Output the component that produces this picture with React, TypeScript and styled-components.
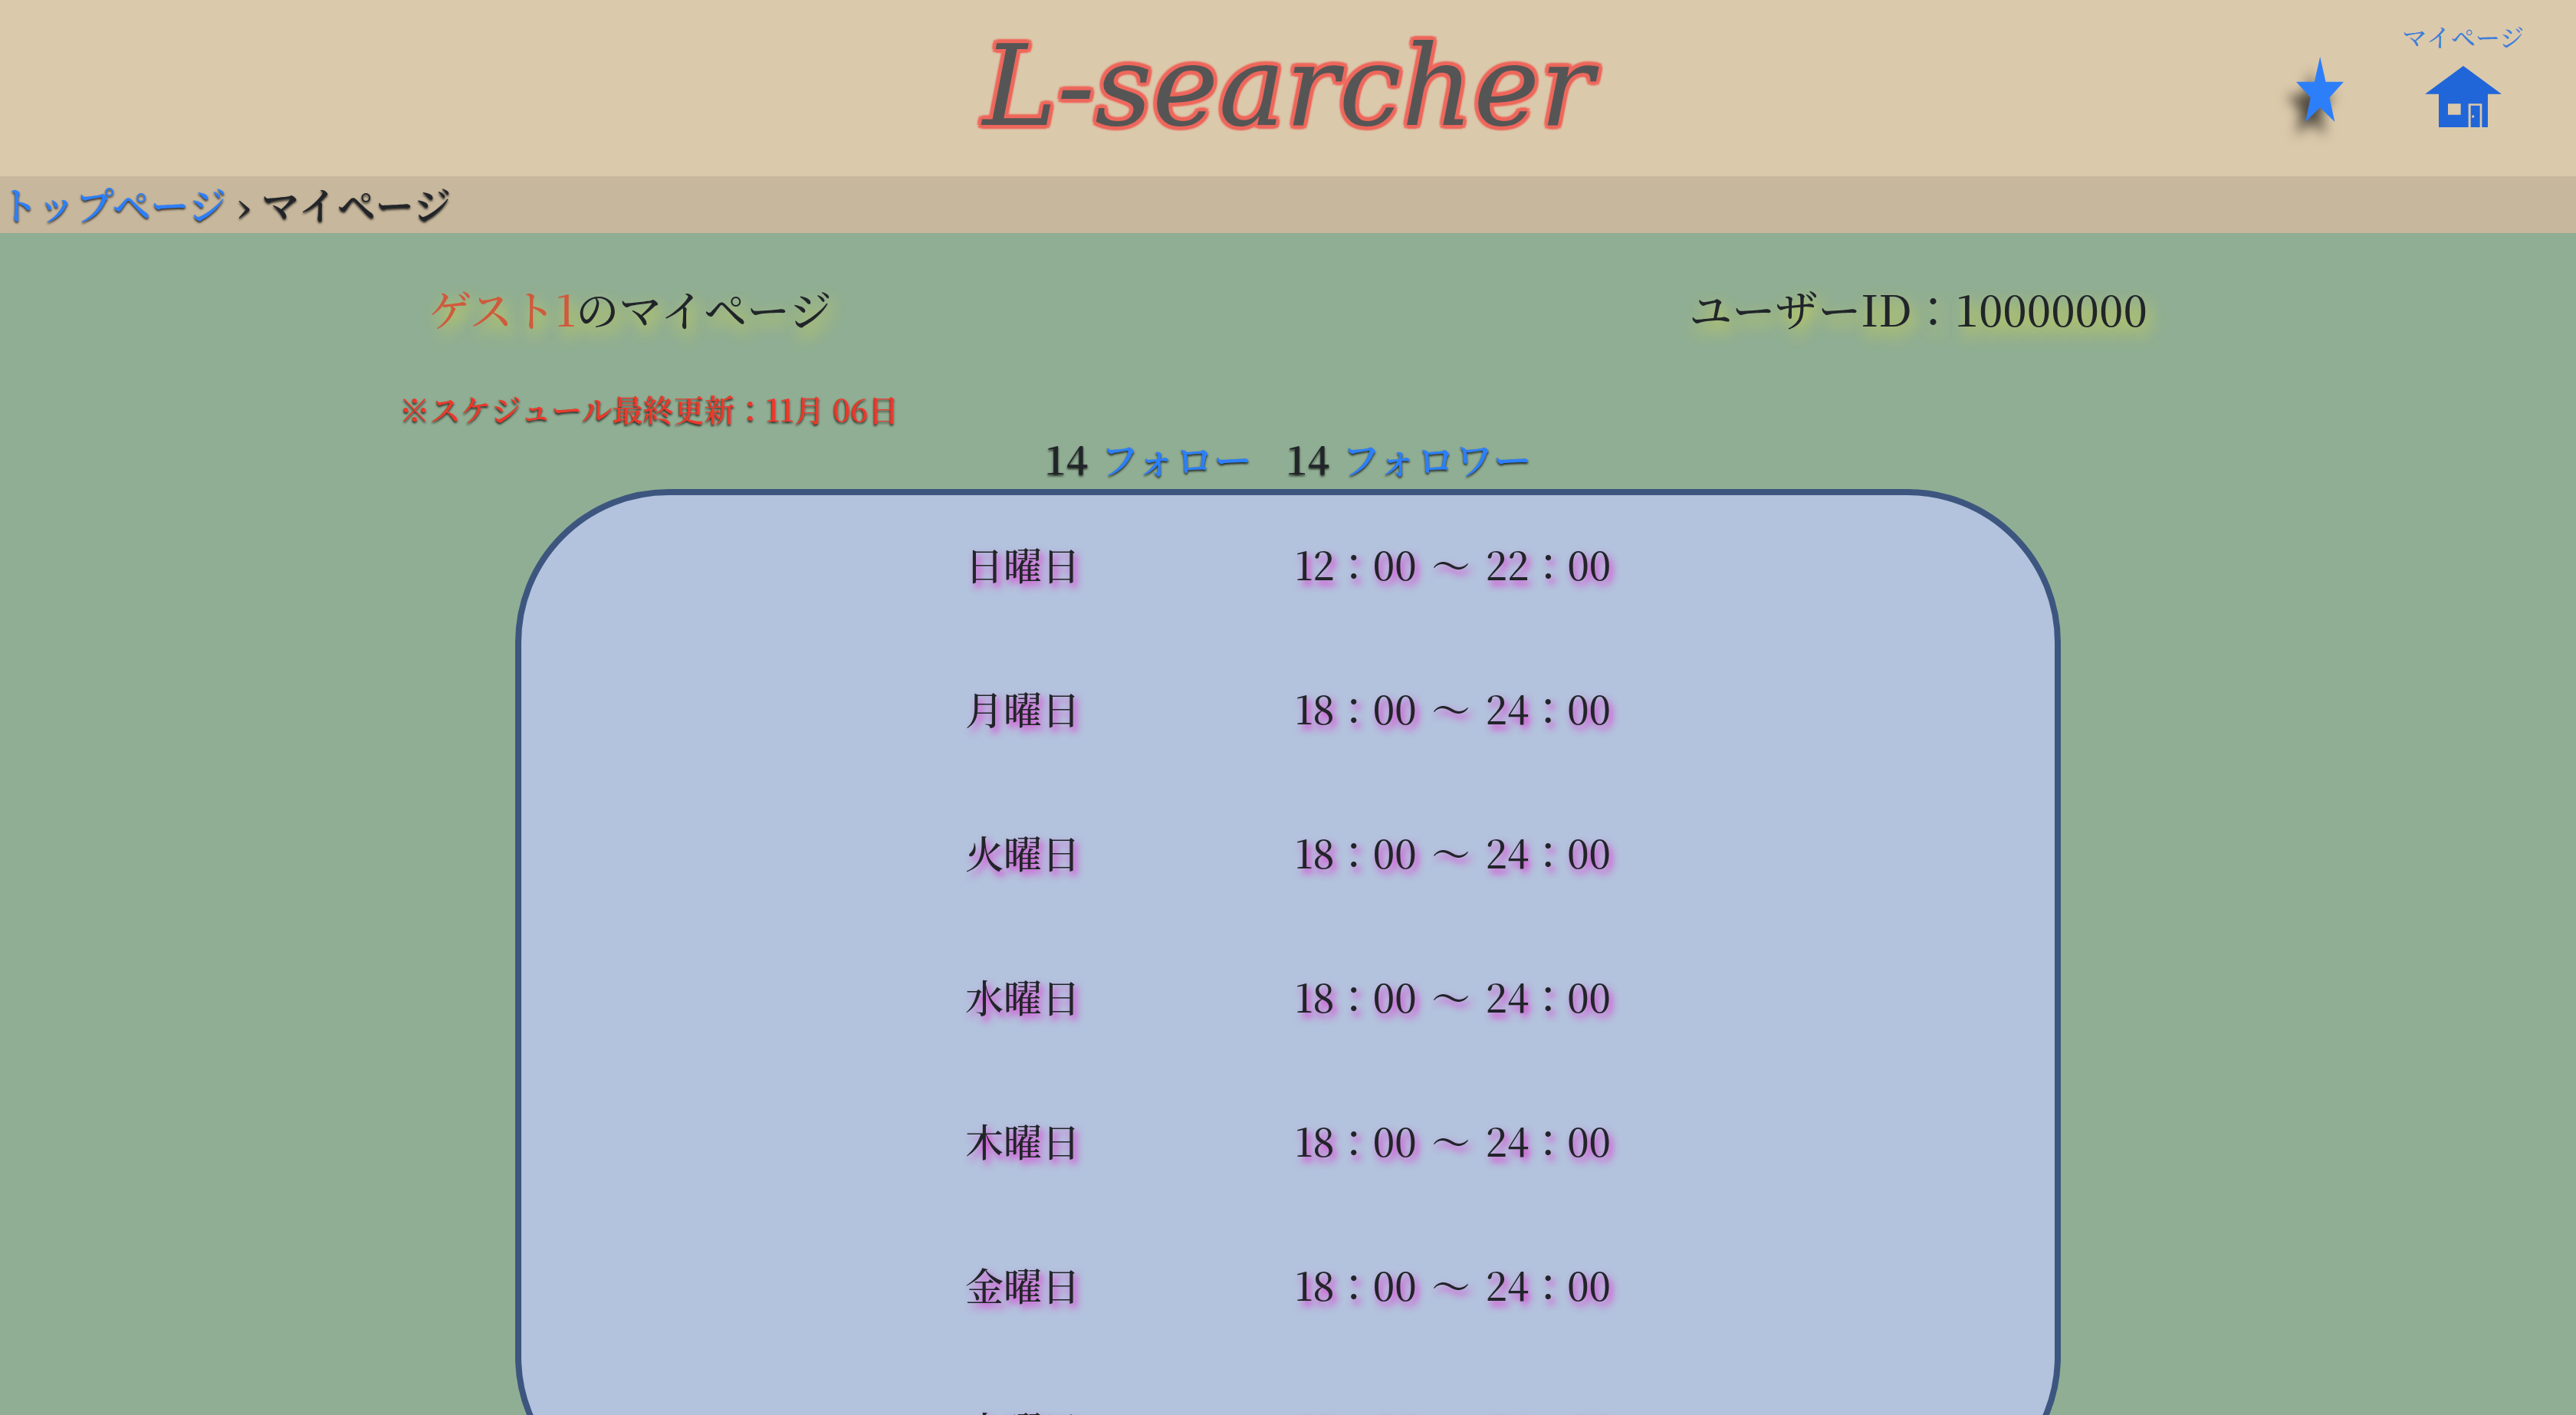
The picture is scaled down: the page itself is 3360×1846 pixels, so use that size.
import React from "react";
import styled, { createGlobalStyle } from "styled-components";

const color = {
  header: "#dbc9ab",
  crumb: "#c7b79d",
  page: "#90ae93",
  card: "#b3c2dd",
  cardBorder: "#3d567f",
  text: "#212529",
  link: "#2d7ff9",
  navLabel: "#3f7fd8",
  house: "#2166d8",
  accent: "#d05a3c",
  notice: "#ea392b",
  titleOutline: "#ee675c",
};

const hardShadow = "0 2px 3px rgba(0, 0, 0, 0.8)";

const GlobalStyle = createGlobalStyle`
  body {
    margin: 0;
    background: ${color.page};
    color: ${color.text};
    font-family: "Noto Serif CJK JP", "Liberation Serif", "Noto Sans CJK JP", serif;
  }
`;

const Header = styled.header`
  display: grid;
  grid-template-columns: 1fr auto 1fr;
  background: ${color.header};
`;

const Title = styled.h1`
  grid-column: 2;
  margin: 0;
  padding-bottom: 6px;
  font-family: "DejaVu Serif", serif;
  font-size: 146px;
  font-style: oblique;
  font-weight: 400;
  line-height: 224px;
  color: #555;
  text-shadow:
    5px 0 2px ${color.titleOutline},
    -5px 0 2px ${color.titleOutline},
    0 5px 2px ${color.titleOutline},
    0 -5px 2px ${color.titleOutline},
    4px 4px 2px ${color.titleOutline},
    -4px 4px 2px ${color.titleOutline},
    4px -4px 2px ${color.titleOutline},
    -4px -4px 2px ${color.titleOutline};
`;

const Nav = styled.nav`
  display: flex;
  justify-content: flex-end;
  align-items: flex-start;
  gap: 76px;
  padding: 31px 68px 0 0;
`;

const StarLink = styled.a`
  display: block;
  padding-top: 43px;
`;

const StarIcon = styled.svg`
  display: block;
  width: 62px;
  height: 85px;
  overflow: visible;
  fill: ${color.link};
  filter: drop-shadow(-12px 18px 8px rgba(0, 0, 0, 0.65));
`;

const MyPageLink = styled.a`
  display: flex;
  flex-direction: column;
  align-items: center;
  gap: 23px;
  color: ${color.navLabel};
  font-size: 32px;
  line-height: 32px;
  font-weight: 500;
  text-decoration: none;
`;

const HouseIcon = styled.svg`
  display: block;
  width: 100px;
  height: 80px;
  fill: ${color.house};
`;

const Breadcrumb = styled.nav`
  padding-bottom: 4px;
  background: ${color.crumb};
  font-size: 50px;
  font-weight: 600;
  line-height: 70px;
  text-shadow: ${hardShadow};
`;

const CrumbList = styled.ol`
  display: flex;
  gap: 14px;
  margin: 0;
  padding: 0;
  list-style: none;
`;

const TextLink = styled.a`
  color: ${color.link};
  text-decoration: none;
`;

const Profile = styled.section`
  display: flex;
  justify-content: space-around;
  padding-bottom: 4px;
  font-size: 56px;
  line-height: 196px;
  text-shadow: 4px 10px 20px rgba(236, 232, 40, 0.8);
`;

const ProfileText = styled.h2`
  margin: 0;
  font-size: inherit;
  font-weight: 500;
`;

const UserName = styled.span`
  color: ${color.accent};
`;

const Updated = styled.p`
  margin: 0;
  padding-left: 15.5%;
  color: ${color.notice};
  font-size: 40px;
  font-weight: 600;
  line-height: 58px;
  text-shadow: ${hardShadow};
`;

const Follows = styled.div`
  display: flex;
  justify-content: center;
  gap: 44px;
  padding-bottom: 6px;
  font-size: 50px;
  font-weight: 600;
  line-height: 70px;
  text-shadow: ${hardShadow};
`;

const FollowCount = styled.div`
  display: flex;
  gap: 16px;
`;

const Card = styled.section`
  box-sizing: border-box;
  width: 60%;
  margin: 0 auto 80px;
  border: 8px solid ${color.cardBorder};
  border-radius: 200px;
  background: ${color.card};
`;

const Schedule = styled.table`
  margin: 0 auto;
  border-collapse: collapse;
  font-size: 50px;
  font-weight: 500;
  line-height: 72px;
  text-shadow: 4px 6px 10px rgba(232, 30, 208, 0.9);
`;

const Day = styled.th`
  box-sizing: border-box;
  height: 188px;
  padding: 0 280px 10px 0;
  font-weight: 500;
`;

const Hours = styled.td`
  padding: 0 0 10px;
`;

const Range = styled.div`
  display: flex;
  gap: 20px;
`;

const week = [
  { day: "日曜日", from: "12：00", to: "22：00" },
  { day: "月曜日", from: "18：00", to: "24：00" },
  { day: "火曜日", from: "18：00", to: "24：00" },
  { day: "水曜日", from: "18：00", to: "24：00" },
  { day: "木曜日", from: "18：00", to: "24：00" },
  { day: "金曜日", from: "18：00", to: "24：00" },
  { day: "土曜日", from: "12：00", to: "24：00" },
];

function Follow({ count, label }: { count: number; label: string }) {
  return (
    <FollowCount>
      <span>{count}</span>
      <TextLink href="#">{label}</TextLink>
    </FollowCount>
  );
}

export default function App() {
  return (
    <>
      <GlobalStyle />
      <Header>
        <Title>L-searcher</Title>
        <Nav>
          <StarLink href="#" aria-label="お気に入り">
            <StarIcon viewBox="162 222 185 254" preserveAspectRatio="none">
              <path d="M255 222L277 320H347L292 381L312 476L255 420L198 476L218 381L162 320H233Z" />
            </StarIcon>
          </StarLink>
          <MyPageLink href="#">
            マイページ
            <HouseIcon viewBox="0 0 300 240">
              <path
                fillRule="evenodd"
                d="M150 0L300 110H246V240H223V148H170V240H54V110H0ZM90 148V191H140V148Z"
              />
              <path
                fillRule="evenodd"
                d="M179 155H215V240H179ZM188 193a5 5 0 1 0 0 10a5 5 0 1 0 0-10Z"
              />
            </HouseIcon>
          </MyPageLink>
        </Nav>
      </Header>
      <Breadcrumb>
        <CrumbList>
          <li>
            <TextLink href="#">トップページ</TextLink>
          </li>
          <li aria-hidden="true">›</li>
          <li>マイページ</li>
        </CrumbList>
      </Breadcrumb>
      <main>
        <Profile>
          <ProfileText>
            <UserName>ゲスト1</UserName>のマイページ
          </ProfileText>
          <ProfileText>ユーザーID：10000000</ProfileText>
        </Profile>
        <Updated>※スケジュール最終更新：11月 06日</Updated>
        <Follows>
          <Follow count={14} label="フォロー" />
          <Follow count={14} label="フォロワー" />
        </Follows>
        <Card>
          <Schedule>
            <tbody>
              {week.map((row) => (
                <tr key={row.day}>
                  <Day scope="row">{row.day}</Day>
                  <Hours>
                    <Range>
                      <span>{row.from}</span>
                      <span>～</span>
                      <span>{row.to}</span>
                    </Range>
                  </Hours>
                </tr>
              ))}
            </tbody>
          </Schedule>
        </Card>
      </main>
    </>
  );
}
